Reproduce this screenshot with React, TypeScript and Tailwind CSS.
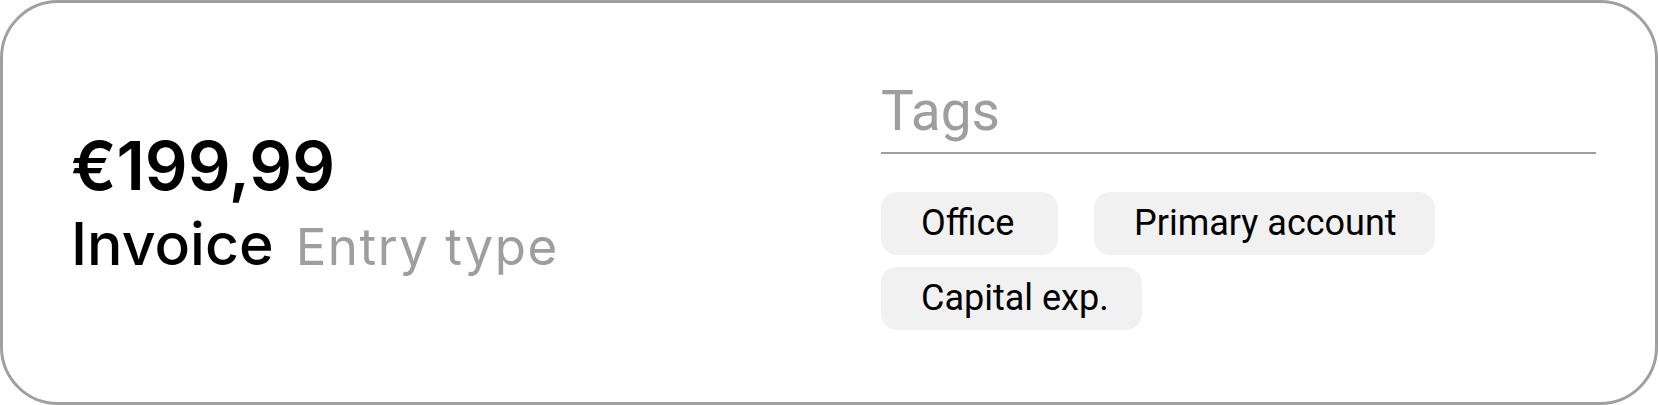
const TAGS = [
  { label: 'Office', width: 'w-[177px]' },
  { label: 'Primary account', width: 'w-[341px]' },
  { label: 'Capital exp.', width: 'w-[261px]' },
];

function TagChip({ label, width }: { label: string; width: string }) {
  return (
    <span
      className={`${width} whitespace-nowrap rounded-[16px] bg-[#f1f1f1] pl-[40px] py-[10px] font-['Roboto',sans-serif] text-[36px] leading-[43px] text-black`}
    >
      {label}
    </span>
  );
}

export default function App() {
  return (
    <div className="flex h-[405px] w-[1658px] items-center rounded-[58px] border-[3px] border-[#a0a0a0] bg-white pl-[68px] pr-[59px]">
      <div className="flex-1 pt-[4px] font-['Inter',sans-serif]">
        <div className="text-[67px] font-semibold leading-[70px] text-black">€199,99</div>
        <div className="mt-[11px] flex items-baseline leading-[64px]">
          <span className="text-[59px] font-medium text-black">Invoice</span>
          <span className="ml-[22px] text-[51px] tracking-[0.03em] text-[#9e9e9e]">Entry type</span>
        </div>
      </div>

      <div className="w-[715px] pt-[4px]">
        <input
          type="text"
          placeholder="Tags"
          className="block w-full border-b-2 border-[#9e9e9e] pb-[9px] font-['Roboto',sans-serif] text-[55px] leading-[64px] text-black outline-none placeholder:text-[#9e9e9e]"
        />
        <div className="mt-[38px] flex flex-wrap gap-x-[36px] gap-y-[12px]">
          {TAGS.map((t) => (
            <TagChip key={t.label} label={t.label} width={t.width} />
          ))}
        </div>
      </div>
    </div>
  );
}
